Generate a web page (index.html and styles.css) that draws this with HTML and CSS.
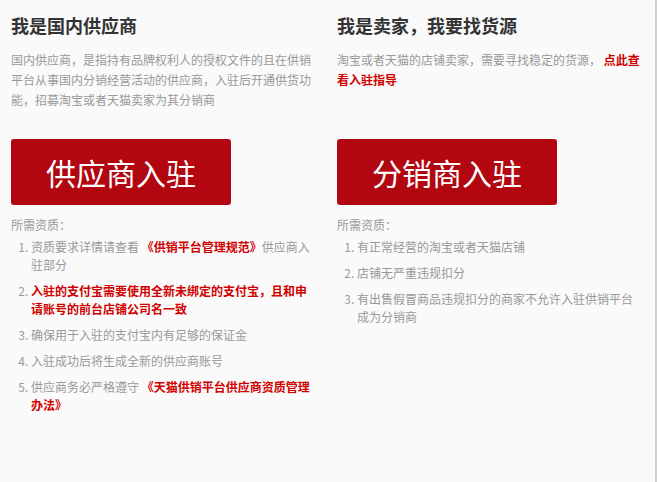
FILE: index.html
```html
<!DOCTYPE html>
<html lang="zh-CN">
<head>
<meta charset="utf-8">
<title>供销平台入驻</title>
<link rel="stylesheet" href="styles.css">
</head>
<body>
<div class="page">
  <div class="col">
    <h2 class="title">我是国内供应商</h2>
    <p class="desc">国内供应商，是指持有品牌权利人的授权文件的且在供销平台从事国内分销经营活动的供应商，入驻后开通供货功能，招募淘宝或者天猫卖家为其分销商</p>
    <a class="btn">供应商入驻</a>
    <div class="req">所需资质：</div>
    <ol class="list">
      <li>资质要求详情请查看 <span class="red">《供销平台管理规范》</span>供应商入驻部分</li>
      <li><span class="red">入驻的支付宝需要使用全新未绑定的支付宝，且和申请账号的前台店铺公司名一致</span></li>
      <li>确保用于入驻的支付宝内有足够的保证金</li>
      <li>入驻成功后将生成全新的供应商账号</li>
      <li>供应商务必严格遵守 <span class="red">《天猫供销平台供应商资质管理办法》</span></li>
    </ol>
  </div>
  <div class="col">
    <h2 class="title">我是卖家，我要找货源</h2>
    <p class="desc">淘宝或者天猫的店铺卖家，需要寻找稳定的货源， <span class="red">点此查看入驻指导</span></p>
    <a class="btn">分销商入驻</a>
    <div class="req">所需资质：</div>
    <ol class="list">
      <li>有正常经营的淘宝或者天猫店铺</li>
      <li>店铺无严重违规扣分</li>
      <li>有出售假冒商品违规扣分的商家不允许入驻供销平台成为分销商</li>
    </ol>
  </div>
</div>
</body>
</html>
```

FILE: styles.css
```css
html, body {
  margin: 0;
  padding: 0;
  height: 100%;
}
body {
  background: #fafafa;
  font-family: "Noto Sans CJK SC", "Noto Sans", sans-serif;
  color: #999;
}
.page {
  display: flex;
  gap: 11px;
  padding-left: 11px;
  width: 657px;
  box-sizing: border-box;
  min-height: 482px;
  border-right: 2px solid #d0d0d0;
}
.col {
  flex: none;
  width: 315px;
}
.title {
  margin: 12px 0 0;
  font-size: 18px;
  line-height: 26px;
  font-weight: bold;
  color: #333;
}
.desc {
  margin: 12px 0 0;
  width: 304px;
  height: 60px;
  font-size: 12px;
  line-height: 20px;
  color: #999;
}
.red {
  color: #d10000;
  font-weight: bold;
}
.btn {
  display: flex;
  align-items: center;
  justify-content: center;
  width: 220px;
  height: 66px;
  box-sizing: border-box;
  margin-top: 29px;
  background: #b20610;
  border-radius: 3px;
  color: #fff;
  font-size: 30px;
}
.req {
  margin-top: 11px;
  font-size: 12px;
  line-height: 18px;
}
.list {
  margin: 4px 0 0;
  padding-left: 20px;
  width: 280px;
  font-size: 12px;
  line-height: 18px;
}
.list li {
  margin-bottom: 8px;
}
```
